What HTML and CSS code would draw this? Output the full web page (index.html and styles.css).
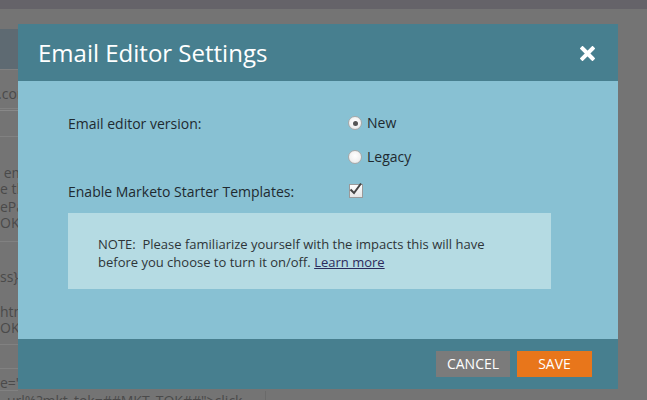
FILE: index.html
```html
<!DOCTYPE html>
<html>
<head>
<meta charset="utf-8">
<link rel="stylesheet" href="styles.css">
</head>
<body>
<div class="page">
  <div class="topbar"></div>
  <div class="content">
    <div class="side">
      <div class="gap20"></div>
      <div class="sidehead"></div>
      <div class="row r1"><div class="tl t">.com</div></div>
      <div class="row r2"></div>
      <div class="row r3"></div>
      <div class="row r4">
        <div class="tl">&nbsp;emails</div>
        <div class="tl">e the</div>
        <div class="tl">ePage</div>
        <div class="tl">OK##</div>
      </div>
      <div class="row r5">
        <div class="tl">ss}}</div>
        <div class="tl sp">html</div>
        <div class="tl">OK##</div>
      </div>
      <div class="row r6"></div>
      <div class="row r7"><div class="tl">e="</div></div>
      <div class="row r8"><div class="ind">url%?mkt_tok=##MKT_TOK##"&gt;click</div></div>
    </div>
    <div class="rest"></div>
  </div>

  <div class="modal">
    <div class="mhead">
      <h1 class="mtitle">Email Editor Settings</h1>
      <svg class="close" width="15" height="15" viewBox="0 0 15 15"><path d="M2.5 2.5 L12.5 12.5 M12.5 2.5 L2.5 12.5" stroke="#fff" stroke-width="4" stroke-linecap="square"/></svg>
    </div>
    <div class="mbody">
      <div class="grid">
        <div class="lbl">Email editor version:</div>
        <div class="opts">
          <label class="opt"><span class="radio on"></span>New</label>
          <label class="opt"><span class="radio"></span>Legacy</label>
        </div>
        <div class="lbl lbl2">Enable Marketo Starter Templates:</div>
        <div class="chkcell">
          <span class="chk"><svg width="16" height="16" viewBox="0 0 16 16"><path d="M1.5 8.5 L5 12 L12 2.5" fill="none" stroke="#454545" stroke-width="2"/></svg></span>
        </div>
      </div>
      <div class="note">NOTE:&nbsp; Please familiarize yourself with the impacts this will have<br>before you choose to turn it on/off. <a href="#" class="link">Learn more</a></div>
    </div>
    <div class="mfoot">
      <button class="btn cancel">CANCEL</button>
      <button class="btn save">SAVE</button>
    </div>
  </div>
</div>
</body>
</html>
```

FILE: styles.css
```css
html, body {
  margin: 0;
  padding: 0;
}
body {
  font-family: "Open Sans", "Noto Sans", sans-serif;
  background: #747474;
}
.page {
  position: relative;
  width: 647px;
  height: 400px;
  overflow: hidden;
  background: #747474;
}
.topbar {
  height: 9px;
  background: #656369;
}
.content {
  display: flex;
  height: 391px;
}
.side {
  width: 266px;
  display: flex;
  flex-direction: column;
  font-size: 14px;
  color: #4a4a4a;
  white-space: nowrap;
  overflow: hidden;
}
.rest {
  flex: 1;
}
.gap20 { height: 20px; flex: none; }
.sidehead { height: 40px; width: 18px; background: #5e6a72; flex: none; border-bottom: 1px solid #808080; }
.row { flex: none; width: 18px; border-bottom: 1px solid #818181; box-sizing: border-box; }
.tl { width: 18px; overflow: hidden; }
.r1 { height: 39px; padding-top: 14px; }
.r1 .t { text-indent: -2px; }
.r2 { height: 2px; border-bottom-color: #888; }
.r3 { height: 26px; }
.r4 { height: 105px; padding-top: 28px; line-height: 16px; }
.r4 .tl:nth-child(3) { margin-top: 2px; }
.r5 { height: 103px; padding-top: 27px; line-height: 16px; }
.r5 .sp { margin-top: 19px; }
.r6 { height: 24px; }
.r7 { height: 22px; padding-top: 6px; line-height: 16px; }
.r8 {
  width: 266px;
  height: 20px;
  border-bottom: none;
  border-right: 1px solid #6a6a6a;
  padding-top: 2px;
  line-height: 16px;
}
.ind { padding-left: 7px; }

.modal {
  position: absolute;
  left: 18px;
  top: 24px;
  width: 600px;
}
.mhead {
  height: 57px;
  background: #477f8f;
  display: flex;
  align-items: center;
  justify-content: space-between;
  padding: 0 23px 0 20px;
}
.mtitle {
  margin: 0;
  font-size: 24px;
  font-weight: 400;
  color: #fff;
  line-height: 30px;
}
.close { display: block; position: relative; top: 1px; }
.mbody {
  height: 258px;
  background: #88c1d3;
  box-sizing: border-box;
  padding: 32px 0 0 50px;
}
.grid {
  display: grid;
  grid-template-columns: 280px 1fr;
  font-size: 14px;
  color: #1f2a30;
}
.lbl { line-height: 20px; padding-top: 1px; }
.opts {
  display: flex;
  flex-direction: column;
  gap: 14px;
}
.opt {
  display: flex;
  align-items: center;
  gap: 5px;
  line-height: 20px;
}
.radio {
  width: 12px;
  height: 12px;
  border: 1px solid #a9a9a9;
  border-radius: 50%;
  background: radial-gradient(circle at 50% 40%, #ffffff 0%, #f1f1f1 60%, #dcdcdc 100%);
  position: relative;
  flex: none;
}
.radio.on::after {
  content: "";
  position: absolute;
  left: 3.5px;
  top: 3.5px;
  width: 5px;
  height: 5px;
  border-radius: 50%;
  background: #555;
}
.lbl2 { margin-top: 15px; padding-top: 0; }
.chkcell {
  padding-top: 17px;
  height: 14px;
}
.chk {
  display: block;
  width: 12px;
  height: 12px;
  border: 1px solid #9a9a9a;
  background: linear-gradient(#fdfdfd, #e6e6e6);
  position: relative;
  margin-left: 1px;
}
.chk svg {
  position: absolute;
  left: -1px;
  top: -4px;
}
.note {
  margin-top: 11px;
  width: 483px;
  height: 76px;
  box-sizing: border-box;
  background: #b5dbe3;
  padding: 22px 0 0 30px;
  font-size: 13px;
  line-height: 18px;
  color: #2e3538;
}
.link {
  color: #2c2a5c;
  text-decoration: underline;
}
.mfoot {
  height: 50px;
  background: #477f8f;
  display: flex;
  justify-content: flex-end;
  align-items: center;
  gap: 7px;
  padding-right: 26px;
}
.btn {
  border: none;
  height: 26px;
  font-family: "Open Sans", "Noto Sans", sans-serif;
  font-size: 14px;
  color: #fff;
  padding: 0;
  line-height: 26px;
}
.cancel { width: 74px; background: #7b7b7b; }
.save { width: 75px; background: #e8761b; }
```
